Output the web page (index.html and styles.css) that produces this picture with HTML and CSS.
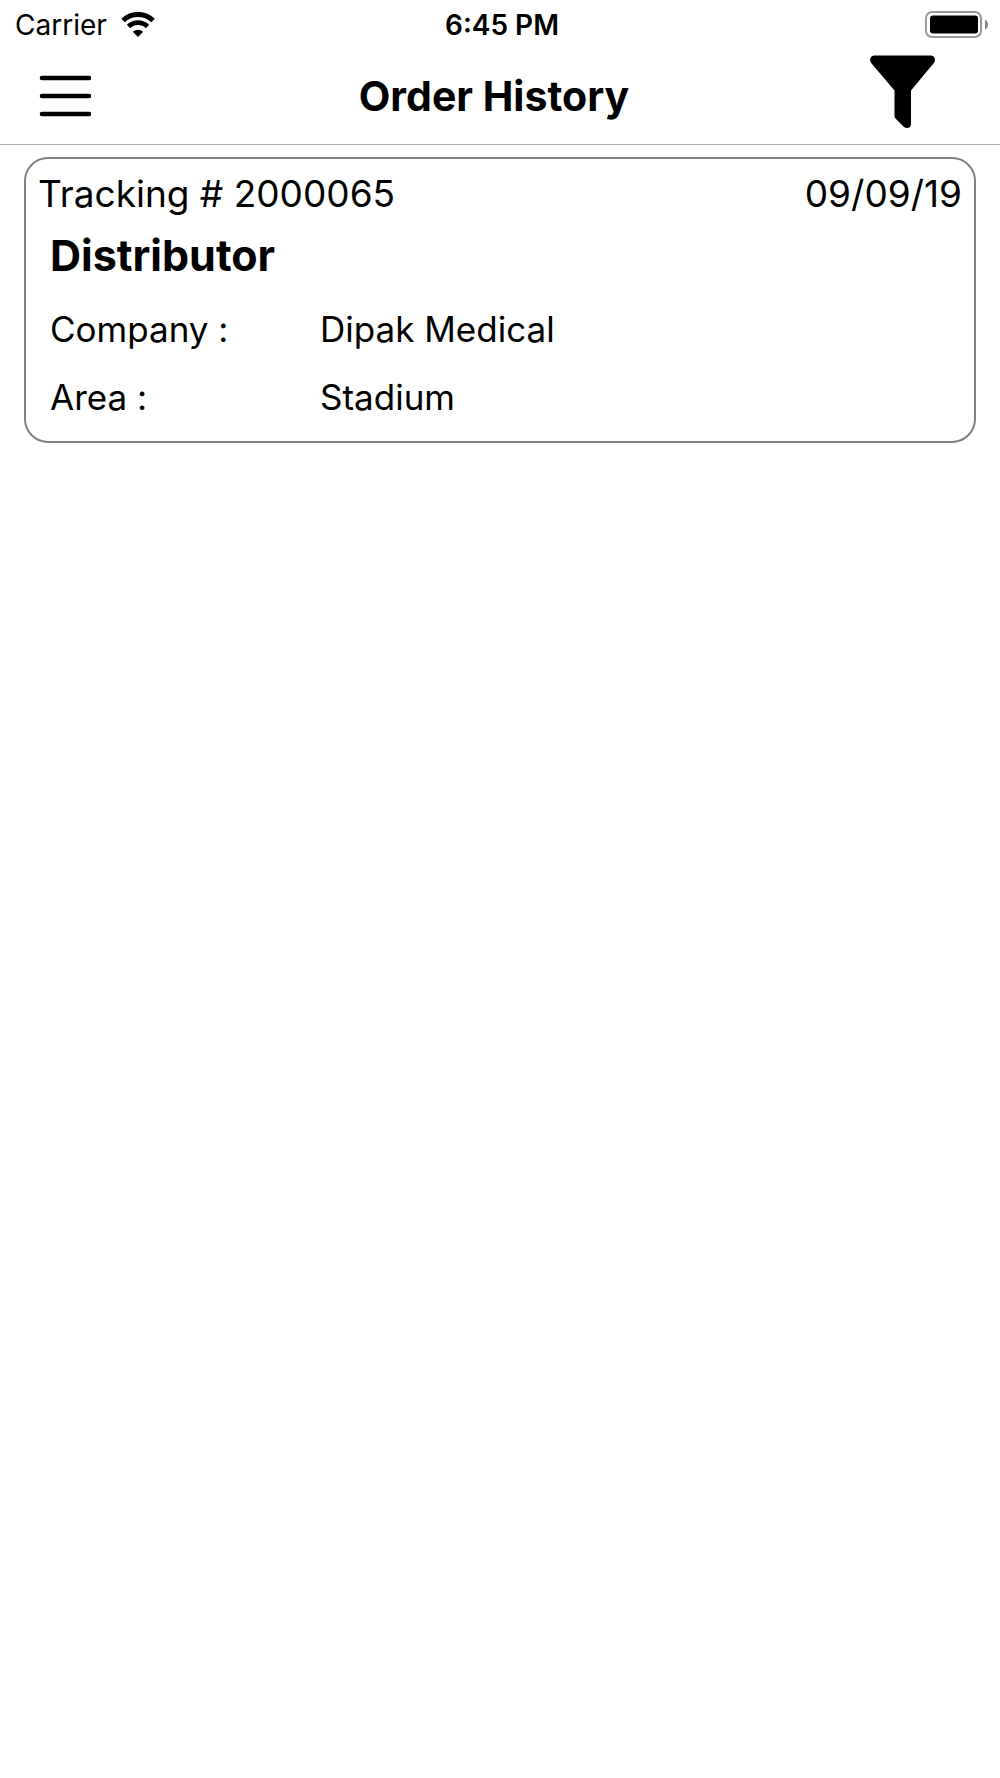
FILE: index.html
```html
<!DOCTYPE html>
<html lang="en">

<head>
    <meta charset="utf-8" />
    <title>Order History</title>
    <meta name="viewport" content="width=device-width, initial-scale=1" />
    <link rel="stylesheet" href="styles.css">
</head>

<body>
    <div class="status-bar">
        <div class="carrier">
            <span>Carrier</span>
            <svg width="34" height="26" viewBox="0 0 34 26" aria-hidden="true">
                <path d="M2 8.500A21.500 21.500 0 0 1 32 8.500" fill="none" stroke="#000" stroke-width="5" />
                <path d="M7.500 14.500A13.500 13.500 0 0 1 26.500 14.500" fill="none" stroke="#000" stroke-width="4.600" />
                <path d="M17 25L11.800 19.800Q17 15.500 22.200 19.800Z" />
            </svg>
        </div>
        <time class="clock">6:45 PM</time>
        <svg class="battery" width="64" height="28" viewBox="0 0 64 28" aria-hidden="true">
            <rect x="1" y="1" width="55" height="25" rx="6" fill="none" stroke="#999" stroke-width="2" />
            <rect x="5" y="4.500" width="48" height="18" rx="3" />
            <path d="M60 8.500Q63 10 63 13.500T60 18.500Z" fill="#888" />
        </svg>
    </div>
    <header class="header">
        <button class="icon-btn" type="button" aria-label="Menu">
            <svg width="52" height="42" viewBox="0 0 52 42">
                <path d="M3 3H50M3 21H50M3 39H50" stroke="#000" stroke-width="4.600" stroke-linecap="round" />
            </svg>
        </button>
        <h1 class="title">Order History</h1>
        <button class="icon-btn filter-btn" type="button" aria-label="Filter">
            <svg width="66" height="74" viewBox="0 0 66 74">
                <path d="M4 0.500H61Q65 1 65 5Q65 7 63 9L41 35.500V69C41 73 37 74 34 72L25.500 63.500Q24.500 62.500 24.500 61V35.500L2 9Q0 7 0 4.500Q0.500 1 4 0.500Z" />
            </svg>
        </button>
    </header>
    <main class="orders">
        <article class="order">
            <div class="order-head">
                <span>Tracking # 2000065</span>
                <time datetime="2019-09-09">09/09/19</time>
            </div>
            <h2 class="order-type">Distributor</h2>
            <dl class="details">
                <dt>Company :</dt>
                <dd>Dipak Medical</dd>
                <dt>Area :</dt>
                <dd>Stadium</dd>
            </dl>
        </article>
    </main>
</body>

</html>
```
FILE: styles.css
```css
body {
    margin: 0;
    background: #fff;
    color: #000;
    font-family: Inter, "Liberation Sans", sans-serif;
}

/* Phone status bar */
.status-bar {
    display: grid;
    grid-template-columns: 1fr auto 1fr;
    align-items: center;
    height: 50px;
    padding: 0 11px 0 15px;
    font-size: 28px;
}

.carrier {
    display: flex;
    align-items: center;
    gap: 14px;
}

.clock {
    font-weight: 600;
}

.battery {
    justify-self: end;
}

/* Header */
.header {
    display: grid;
    grid-template-columns: 1fr auto 1fr;
    align-items: center;
    box-sizing: border-box;
    height: 95px;
    padding: 0 51px 2px 39px;
    border-bottom: 1px solid #aeaeb2;
}

.title {
    margin: 0;
    font-size: 41px;
    font-weight: 700;
    line-height: 48px;
}

.icon-btn {
    display: flex;
    justify-self: start;
    padding: 0;
    border: 0;
    background: none;
    cursor: pointer;
}

.filter-btn {
    justify-self: end;
    padding: 0 13px 8px 0;
}

/* Order card */
.orders {
    padding: 12px 24px;
}

.order {
    padding: 12px;
    border: 2px solid #808080;
    border-radius: 24px;
}

.order-head {
    display: flex;
    justify-content: space-between;
    font-size: 37px;
    line-height: 46px;
}

.order-type {
    margin: 0;
    padding: 8px 12px;
    font-size: 43px;
    font-weight: 700;
    line-height: 60px;
}

.details {
    display: grid;
    grid-template-columns: 270px 1fr;
    row-gap: 20px;
    margin: 0;
    padding: 12px 12px 8px;
    font-size: 35px;
    line-height: 48px;
}

.details dd {
    margin: 0;
}
```
